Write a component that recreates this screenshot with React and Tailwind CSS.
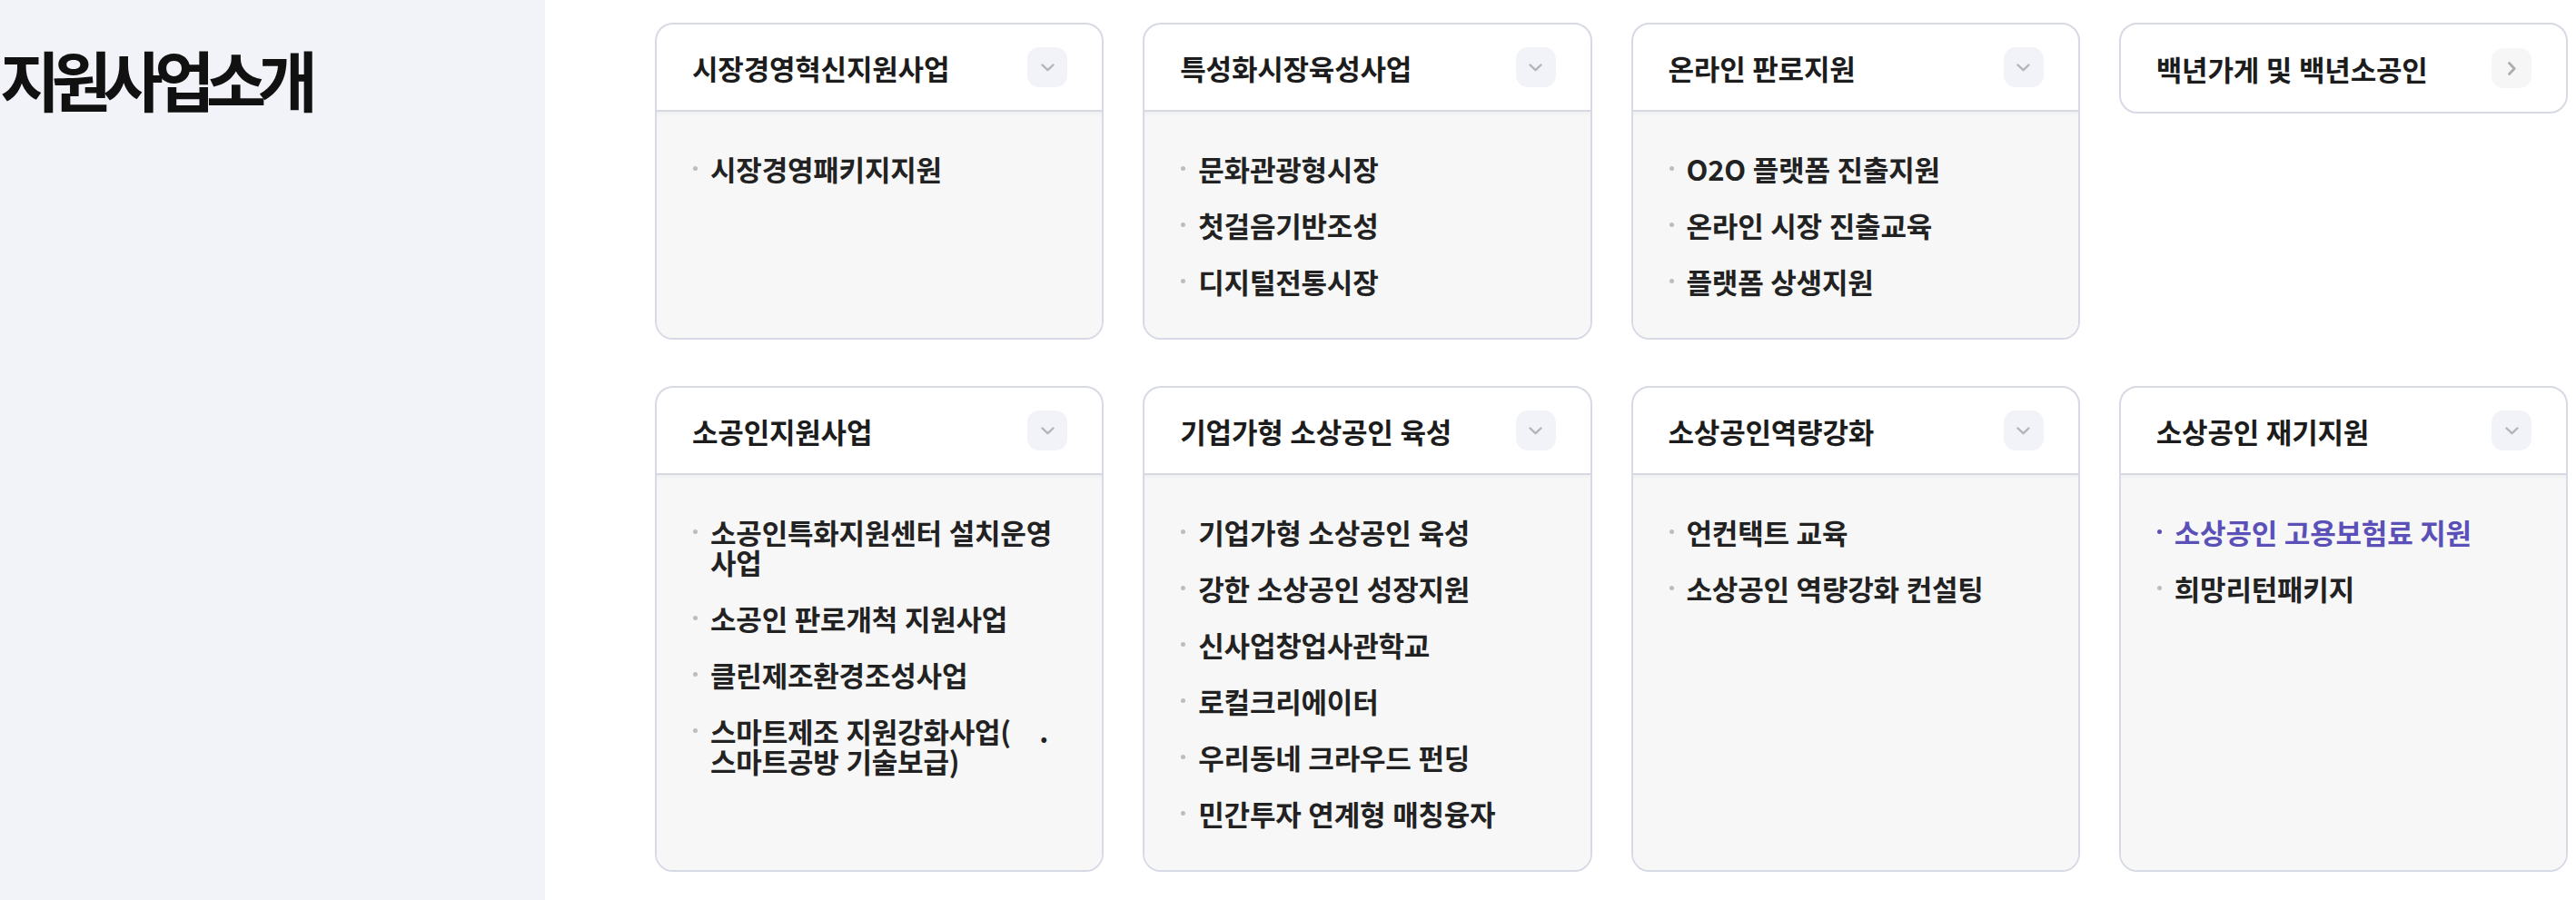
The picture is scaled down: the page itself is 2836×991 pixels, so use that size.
import React from "react";

const GROUPS = [
  { title: "시장경영혁신지원사업", items: [{ lines: ["시장경영패키지지원"] }] },
  {
    title: "특성화시장육성사업",
    items: [{ lines: ["문화관광형시장"] }, { lines: ["첫걸음기반조성"] }, { lines: ["디지털전통시장"] }],
  },
  {
    title: "온라인 판로지원",
    items: [{ lines: ["O2O 플랫폼 진출지원"] }, { lines: ["온라인 시장 진출교육"] }, { lines: ["플랫폼 상생지원"] }],
  },
  { title: "백년가게 및 백년소공인", link: true },
  {
    title: "소공인지원사업",
    items: [
      { lines: ["소공인특화지원센터 설치운영", "사업"] },
      { lines: ["소공인 판로개척 지원사업"] },
      { lines: ["클린제조환경조성사업"] },
      { lines: ["스마트제조 지원강화사업(\u00a0\u00a0\u00a0\u00a0.", "스마트공방 기술보급)"] },
    ],
  },
  {
    title: "기업가형 소상공인 육성",
    items: [
      { lines: ["기업가형 소상공인 육성"] },
      { lines: ["강한 소상공인 성장지원"] },
      { lines: ["신사업창업사관학교"] },
      { lines: ["로컬크리에이터"] },
      { lines: ["우리동네 크라우드 펀딩"] },
      { lines: ["민간투자 연계형 매칭융자"] },
    ],
  },
  {
    title: "소상공인역량강화",
    items: [{ lines: ["언컨택트 교육"] }, { lines: ["소상공인 역량강화 컨설팅"] }],
  },
  {
    title: "소상공인 재기지원",
    items: [{ lines: ["소상공인 고용보험료 지원"], active: true }, { lines: ["희망리턴패키지"] }],
  },
];

const ChevronDown = () => (
  <svg width="15" height="9" viewBox="0 0 15 9" fill="none">
    <polyline points="1.5,1.5 7.5,7.2 13.5,1.5" stroke="#b4b4b8" strokeWidth="2.4" strokeLinecap="round" strokeLinejoin="round" />
  </svg>
);

const ChevronRight = () => (
  <svg width="9" height="15" viewBox="0 0 9 15" fill="none">
    <polyline points="1.5,1.5 7.2,7.5 1.5,13.5" stroke="#adadad" strokeWidth="2.8" strokeLinecap="round" strokeLinejoin="round" />
  </svg>
);

const Card = ({ title, items, link }) => {
  return (
    <div
      className={`flex flex-col overflow-hidden rounded-[20px] border-2 border-[#d7dae4] bg-white ${
        link ? "self-start" : ""
      }`}
    >
      {/* HEADER */}
      <div
        className={`flex h-[96px] items-center justify-between pl-[39px] pr-[38px] ${
          link ? "" : "border-b-2 border-[#d7dae4]"
        }`}
      >
        <span className="text-[31px] font-bold leading-none tracking-[-0.2px] [word-spacing:1px] text-[#1c1c1c]">
          {title}
        </span>
        <span
          className={`flex h-[44px] w-[44px] items-center justify-center rounded-[13px] ${
            link ? "bg-[#f6f6f7]" : "bg-[#f2f3f8]"
          }`}
        >
          {link ? <ChevronRight /> : <ChevronDown />}
        </span>
      </div>

      {/* LIST */}
      {!link && (
        <ul className="flex flex-1 flex-col gap-[29px] bg-[#f7f7f8] px-[40px] py-[46px] shadow-[inset_0_5px_6px_-5px_rgba(0,0,0,0.07)]">
          {items.map((item, i) => (
            <li key={i} className="flex items-start gap-[14px]">
              <span
                className={`mt-[14px] h-[5px] w-[5px] shrink-0 rounded-full ${
                  item.active ? "bg-[#5b50b8]" : "bg-[#bdbdc0]"
                }`}
              />
              <span
                className={`text-[31px] font-bold leading-[33px] tracking-[-0.2px] [word-spacing:1px] ${
                  item.active ? "text-[#5b50b8]" : "text-[#222]"
                }`}
              >
                {item.lines.map((line, j) => (
                  <span key={j} className="block whitespace-nowrap">
                    {line}
                  </span>
                ))}
              </span>
            </li>
          ))}
        </ul>
      )}
    </div>
  );
};

const App = () => {
  return (
    <div className="flex min-h-screen w-full bg-white font-['Noto_Sans_CJK_KR','Noto_Sans',sans-serif]">
      {/* SIDE TITLE */}
      <aside className="w-[600px] shrink-0 bg-[#f2f3f8] pt-[50px]">
        <h2 className="text-[72px] font-bold leading-none tracking-[-9.5px] text-[#111]">지원사업소개</h2>
      </aside>

      {/* CARDS */}
      <main className="flex-1 pb-[31px] pl-[121px] pr-[9px] pt-[25px]">
        <div className="grid grid-cols-4 gap-x-[43px] gap-y-[51px]">
          {GROUPS.map((g) => (
            <Card key={g.title} {...g} />
          ))}
        </div>
      </main>
    </div>
  );
};

export default App;
